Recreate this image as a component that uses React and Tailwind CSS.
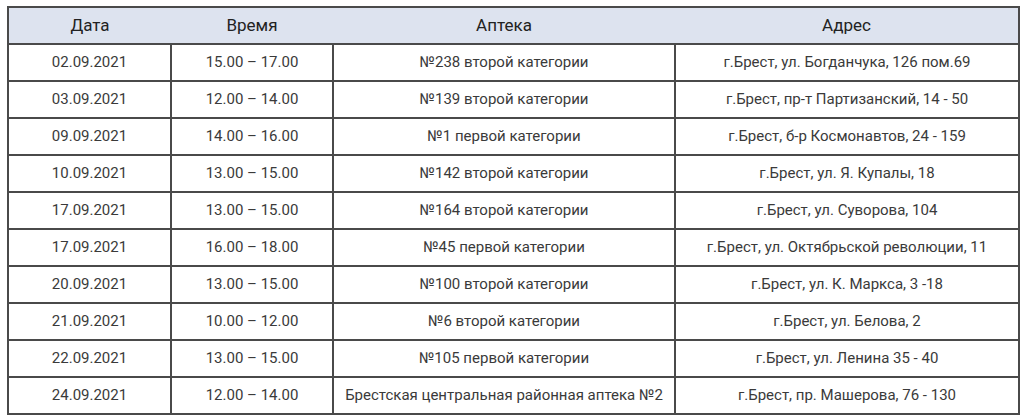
const rows = [
  ['02.09.2021', '15.00 – 17.00', '№238 второй категории', 'г.Брест, ул. Богданчука, 126 пом.69'],
  ['03.09.2021', '12.00 – 14.00', '№139 второй категории', 'г.Брест, пр-т Партизанский, 14 - 50'],
  ['09.09.2021', '14.00 – 16.00', '№1 первой категории', 'г.Брест, б-р Космонавтов, 24 - 159'],
  ['10.09.2021', '13.00 – 15.00', '№142 второй категории', 'г.Брест, ул. Я. Купалы, 18'],
  ['17.09.2021', '13.00 – 15.00', '№164 второй категории', 'г.Брест, ул. Суворова, 104'],
  ['17.09.2021', '16.00 – 18.00', '№45 первой категории', 'г.Брест, ул. Октябрьской революции, 11'],
  ['20.09.2021', '13.00 – 15.00', '№100 второй категории', 'г.Брест, ул. К. Маркса, 3 -18'],
  ['21.09.2021', '10.00 – 12.00', '№6 второй категории', 'г.Брест, ул. Белова, 2'],
  ['22.09.2021', '13.00 – 15.00', '№105 первой категории', 'г.Брест, ул. Ленина 35 - 40'],
  ['24.09.2021', '12.00 – 14.00', 'Брестская центральная районная аптека №2', 'г.Брест, пр. Машерова, 76 - 130'],
];

export default function App() {
  return (
    <div className="bg-white w-[1024px] h-[419px] pt-[6px] pl-[7px] font-['Roboto',sans-serif]">
      <table className="border-collapse table-fixed w-[1011px] border-2 border-[#4a4a4a] text-[#3a3a3a]">
        <colgroup>
          <col className="w-[163px]" />
          <col className="w-[162px]" />
          <col className="w-[342px]" />
          <col className="w-[344px]" />
        </colgroup>
        <thead>
          <tr className="bg-[#dde3ef] h-[37px] border-b-2 border-[#4a4a4a]">
            <th className="font-normal text-[17px] text-[#222]">Дата</th>
            <th className="font-normal text-[17px] text-[#222]">Время</th>
            <th className="font-normal text-[17px] text-[#222]">Аптека</th>
            <th className="font-normal text-[17px] text-[#222]">Адрес</th>
          </tr>
        </thead>
        <tbody>
          {rows.map((r, i) => (
            <tr key={i} className="h-[37px]">
              {r.map((c, j) => (
                <td key={j} className="border-2 border-[#4a4a4a] text-center text-[15px] p-0 whitespace-nowrap">
                  {c}
                </td>
              ))}
            </tr>
          ))}
        </tbody>
      </table>
    </div>
  );
}
